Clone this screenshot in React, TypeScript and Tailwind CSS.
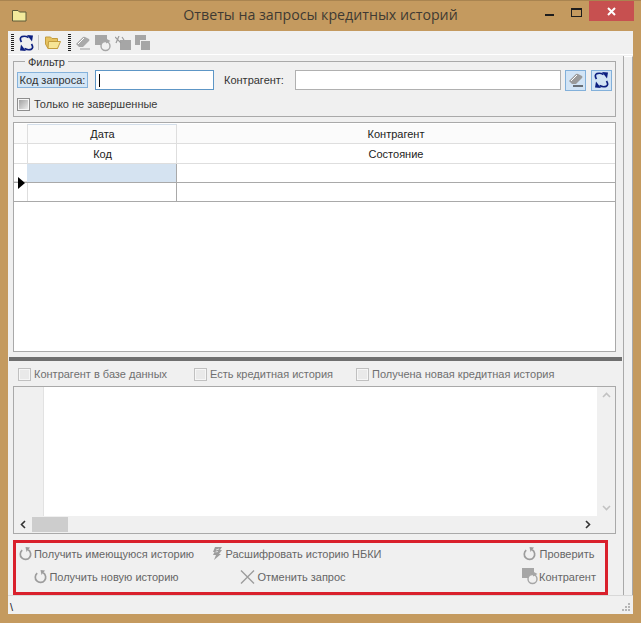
import type { ReactNode } from 'react'

const font = { fontFamily: '"Liberation Sans", Arial, sans-serif' }

function SyncIcon() {
  return (
    <svg width="15" height="16" viewBox="0 0 15 16" fill="none" stroke="#0c1f80" strokeWidth="1.7">
      <path d="M2.5 7 Q0 3 3 1.6 Q6 0.6 9.5 2.4" />
      <path d="M8 0 L14 0.5 L13 6.5 Z" fill="#0c1f80" stroke="none" />
      <path d="M12.5 9 Q15 13 12 14.4 Q9 15.4 5.5 13.6" />
      <path d="M7 16 L1 15.5 L2 9.5 Z" fill="#0c1f80" stroke="none" />
    </svg>
  )
}

function FolderIcon() {
  return (
    <svg width="16" height="14" viewBox="0 0 16 14">
      <path d="M0.5 1 H5.5 L7 2.5 H12.5 V12.5 H3 L0.5 8 Z" fill="#e6c25f" stroke="#c39c3e" />
      <path d="M3.5 5.5 H15.5 L12.5 12.5 H3 Z" fill="#f7e596" stroke="#c39c3e" />
    </svg>
  )
}

function EraserIcon({ color = '#a9a9a9', line = '#a9a9a9' }: { color?: string; line?: string }) {
  return (
    <svg width="16" height="14" viewBox="0 0 16 14">
      <path d="M1 8 L8 1 Q9 0.5 10 1 L14 3 Q15 4 14 5 L8 11 H4 Z" fill={color} />
      <path d="M3 8 L9 2" stroke="#fff" strokeWidth="1" />
      <path d="M5 13 H15" stroke={line} strokeWidth="1.2" />
    </svg>
  )
}

function SquareRefresh({ bg = '#f0f0f0' }: { bg?: string }) {
  return (
    <svg width="16" height="17" viewBox="0 0 16 17">
      <rect x="0" y="0" width="12" height="10" fill="#a6a6a6" />
      <circle cx="10.5" cy="11" r="4.5" fill={bg} stroke="#a6a6a6" strokeWidth="1.4" />
      <path d="M11 3.5 L15.5 6 L11 8.5 Z" fill="#a6a6a6" />
    </svg>
  )
}

function PercentSquare() {
  return (
    <svg width="16" height="14" viewBox="0 0 16 14">
      <rect x="5" y="4" width="11" height="10" fill="#a6a6a6" />
      <path d="M0 1 L6 7 M4 0 L1 7 M7 1 L9 4" stroke="#9c9c9c" strokeWidth="1.2" />
    </svg>
  )
}

function DoubleSquare() {
  return (
    <svg width="16" height="16" viewBox="0 0 16 16">
      <rect x="0" y="0" width="11" height="10" fill="#a6a6a6" />
      <rect x="5.5" y="5.5" width="10" height="10" fill="#a6a6a6" stroke="#f0f0f0" />
    </svg>
  )
}

function Reload() {
  return (
    <svg width="13" height="14" viewBox="0 0 13 14" fill="none">
      <path d="M3.2 3.2 A5.2 5.2 0 1 0 9.2 2.8" stroke="#9c9c9c" strokeWidth="1.7" />
      <path d="M6.5 0 L11 0.5 L7.5 5 Z" fill="#9c9c9c" />
    </svg>
  )
}

function Bolt() {
  return (
    <svg width="11" height="13" viewBox="0 0 11 13">
      <path d="M3 0 H10 L8 3 H10 L7 7 H9 L2 13 L4 8 H1 L2.5 5 H1 Z" fill="#9c9c9c" />
      <path d="M4 3 L7 2 M3.5 5 L6 4.5" stroke="#f0f0f0" strokeWidth="0.8" />
    </svg>
  )
}

function Cross() {
  return (
    <svg width="15" height="14" viewBox="0 0 15 14">
      <path d="M1 0.5 L14 13.5 M14 0.5 L1 13.5" stroke="#9c9c9c" strokeWidth="1.4" />
    </svg>
  )
}

function Check({ label, dim }: { label: string; dim?: boolean }) {
  return (
    <div className={`flex items-center ${dim ? 'gap-[3px]' : 'gap-[4px]'}`}>
      <span className={`block w-[13px] h-[13px] border ${dim ? 'border-[#c0c0c0] bg-[#e9e9e9]' : 'border-[#8e8e8e] bg-gradient-to-br from-[#9a9a9a] to-[#f4f4f4]'} shadow-[inset_0_0_0_1px_#f6f6f6]`} />
      <span className={`text-[11px] leading-[14px] whitespace-nowrap ${dim ? 'text-[#6f6f6f]' : 'text-[#3a3a3a]'}`}>{label}</span>
    </div>
  )
}

function ActionButton({ icon, label, gap = 'gap-[2px]' }: { icon: ReactNode; label: string; gap?: string }) {
  return (
    <div className={`flex items-center justify-center ${gap} text-[11px] leading-[14px] text-[#666] whitespace-nowrap`}>
      {icon}
      <span>{label}</span>
    </div>
  )
}

function GridRow({ left, right, cls = '', leftCls = '' }: { left: string; right: string; cls?: string; leftCls?: string }) {
  return (
    <div className={`flex h-[20px] border-b border-[#dedede] ${cls}`}>
      <div className="w-[13px] shrink-0" />
      <div className={`w-[150px] shrink-0 flex items-center justify-center pt-[1px] pl-[1px] border-x border-[#dedede] ${leftCls}`}>{left}</div>
      <div className="flex-1 flex items-center justify-center pt-[1px]">{right}</div>
    </div>
  )
}

export default function App() {
  return (
    <div className="w-[641px] h-[623px] bg-[#c49a5f] flex flex-col overflow-hidden" style={font}>
      <div className="h-[31px] shrink-0 relative flex items-center justify-center border-t border-[#a98450]">
        <svg className="absolute left-[12px] top-[8px]" width="15" height="13" viewBox="0 0 15 13">
          <path d="M0.5 1.5 H6 L7.5 3 H14 V12 H0.5 Z" fill="#f3ea9c" stroke="#5c5a38" />
        </svg>
        <span className="text-[14.2px] text-[#3f3a33] pb-[2px]" style={{ fontFamily: '"Open Sans", sans-serif' }}>
          Ответы на запросы кредитных историй
        </span>
        <div className="absolute left-[545px] top-[13px] w-[9px] h-[2px] bg-[#1d1d1d]" />
        <div className="absolute left-[571px] top-[7px] w-[11px] h-[9px] border border-[#1d1d1d] border-t-2" />
        <div className="absolute left-[589px] top-[0px] w-[45px] h-[20px] bg-[#c75050] flex items-center justify-center">
          <svg width="9" height="9" viewBox="0 0 9 9">
            <path d="M1 1 L8 8 M8 1 L1 8" stroke="#fff" strokeWidth="2" />
          </svg>
        </div>
      </div>

      <div className="flex-1 mx-[8px] mb-[9px] bg-[#f0f0f0] flex flex-col min-h-0 text-[#222]">
        {/* toolbar */}
        <div className="h-[24px] shrink-0 border-b border-white flex items-center pl-[3px]">
          <div className="w-[3px] h-[18px] mr-[5px] bg-[repeating-linear-gradient(to_bottom,#222_0_1px,transparent_1px_2px)]" />
          <div className="mt-[1px]"><SyncIcon /></div>
          <div className="w-px h-[15px] bg-[#c4c4c4] ml-[4px] mr-[6px]" />
          <FolderIcon />
          <div className="w-[3px] h-[18px] ml-[7px] mr-[3px] bg-[repeating-linear-gradient(to_bottom,#222_0_1px,transparent_1px_2px)]" />
          <div className="flex items-center gap-[3px] ml-[1px]">
            <EraserIcon />
            <div className="mt-[2px] ml-[1px]"><SquareRefresh /></div>
            <div className="ml-[1px]"><PercentSquare /></div>
            <div className="ml-[1px]"><DoubleSquare /></div>
          </div>
        </div>

        <div className="flex-1 flex min-h-0">
          <div className="w-[614px] shrink-0 flex flex-col min-h-0">
            {/* filter */}
            <div className="relative ml-[5px] mt-[6px] w-[603px] h-[56px] shrink-0 border border-[#a9a9a9] pt-[8px] pl-[3px]">
              <span className="absolute left-[11px] top-[-7px] bg-[#f0f0f0] px-[3px] text-[11px] leading-[14px] text-[#333]">Фильтр</span>
              <div className="flex items-center h-[20px]">
                <span className="block w-[71px] h-[16px] border border-[#85b2db] bg-[#d4e6f6] text-[11px] leading-[14px] text-center whitespace-nowrap text-[#333]">Код запроса:</span>
                <div className="ml-[7px] w-[119px] h-[20px] border border-[#5d96c6] bg-white flex items-center pl-[3px]">
                  <div className="w-px h-[13px] bg-black" />
                </div>
                <span className="ml-[10px] text-[11px] leading-[14px] w-[71px] whitespace-nowrap text-[#333]">Контрагент:</span>
                <div className="w-[266px] h-[20px] border border-[#b0b0b0] bg-white" />
                <div className="ml-[4px] w-[21px] h-[21px] border border-[#82b0da] bg-[#d2e4f5] flex items-center justify-center">
                  <EraserIcon color="#9a9a9a" line="#222" />
                </div>
                <div className="ml-[5px] w-[21px] h-[21px] border border-[#82b0da] bg-[#d2e4f5] flex items-center justify-center">
                  <SyncIcon />
                </div>
              </div>
              <div className="mt-[7px]">
                <Check label="Только не завершенные" />
              </div>
            </div>

            {/* grid */}
            <div className="ml-[5px] mt-[5px] w-[603px] h-[230px] shrink-0 border border-[#a9a9a9] bg-white text-[11px] text-[#222] pt-[1px]">
              <GridRow left="Дата" right="Контрагент" cls="bg-[#fbfbfb]" leftCls="border-t border-t-[#d3deea]" />
              <GridRow left="Код" right="Состояние" />
              <div className="flex h-[19px] border-b border-[#a9a9a9]">
                <div className="w-[13px] shrink-0 border-b border-[#dedede] relative">
                  <div className="absolute left-[4px] top-[13px] w-0 h-0 border-y-[6px] border-y-transparent border-l-[7px] border-l-black" />
                </div>
                <div className="w-[149px] shrink-0 bg-[#d5e3f1]" />
                <div className="flex-1 border-l border-[#a9a9a9]" />
              </div>
              <div className="flex h-[19px] border-b border-[#a9a9a9]">
                <div className="w-[13px] shrink-0" />
                <div className="w-[149px] shrink-0 border-l border-[#dedede]" />
                <div className="flex-1 border-l border-[#a9a9a9]" />
              </div>
            </div>

            {/* splitter */}
            <div className="ml-[1px] mt-[5px] h-[4px] shrink-0 bg-[#6f6f6f]" />

            <div className="ml-[10px] mt-[6px] h-[14px] shrink-0 flex items-center">
              <div className="w-[176px]"><Check label="Контрагент в базе данных" dim /></div>
              <div className="w-[162px]"><Check label="Есть кредитная история" dim /></div>
              <Check label="Получена новая кредитная история" dim />
            </div>

            {/* memo */}
            <div className="ml-[5px] mt-[5px] w-[603px] h-[148px] shrink-0 border border-[#a9a9a9] flex flex-col">
              <div className="flex-1 flex min-h-0">
                <div className="w-[30px] bg-[#f0f0f0] border-r border-[#e2e2e2]" />
                <div className="flex-1 bg-white" />
                <div className="w-[18px] bg-[#f0f0f0] flex flex-col items-center justify-between py-[5px]">
                  <svg width="9" height="6" viewBox="0 0 9 6" fill="none"><path d="M1 5 L4.5 1.5 L8 5" stroke="#c2c2c2" strokeWidth="1.6" /></svg>
                  <svg width="9" height="6" viewBox="0 0 9 6" fill="none"><path d="M1 1 L4.5 4.5 L8 1" stroke="#c2c2c2" strokeWidth="1.6" /></svg>
                </div>
              </div>
              <div className="h-[17px] shrink-0 bg-[#f0f0f0] flex items-center">
                <svg className="ml-[6px]" width="6" height="9" viewBox="0 0 6 9" fill="none"><path d="M5 1 L1.5 4.5 L5 8" stroke="#333" strokeWidth="1.6" /></svg>
                <div className="ml-[6px] w-[36px] h-[15px] bg-[#cdcdcd]" />
                <svg className="ml-auto mr-[24px]" width="6" height="9" viewBox="0 0 6 9" fill="none"><path d="M1 1 L4.5 4.5 L1 8" stroke="#333" strokeWidth="1.6" /></svg>
              </div>
            </div>

            {/* actions */}
            <div className="ml-[5px] mt-[6px] w-[595px] h-[55px] shrink-0 border-[3px] border-[#d9202c] grid grid-cols-[181px_199px_1fr] grid-rows-[21px_25px] content-start items-center">
              <ActionButton icon={<Reload />} label="Получить имеющуюся историю" />
              <ActionButton icon={<Bolt />} label="Расшифровать историю НБКИ" gap="gap-[3px]" />
              <div className="justify-self-end w-[92px]"><ActionButton icon={<Reload />} label="Проверить" gap="gap-[3px]" /></div>
              <ActionButton icon={<Reload />} label="Получить новую историю" />
              <div className="pr-[7px]"><ActionButton icon={<Cross />} label="Отменить запрос" /></div>
              <div className="justify-self-end w-[92px]"><ActionButton icon={<SquareRefresh />} label="Контрагент" gap="gap-[1px]" /></div>
            </div>
          </div>

          {/* right strip */}
          <div className="flex-1 mt-[1px] ml-[1px] border-l border-[#a9a9a9] flex">
            <div className="w-[9px] border-r border-[#a9a9a9] border-t border-t-white" />
          </div>
        </div>

        {/* status bar */}
        <div className="h-[19px] shrink-0 border-t border-[#d8d8d8] relative text-[11px] leading-[14px] pl-[2px] pt-[4px] text-[#222]">
          \
          <svg className="absolute right-[2px] bottom-[2px]" width="9" height="9" viewBox="0 0 9 9" fill="#b5b5b5">
            <rect x="6" y="0" width="2" height="2" /><rect x="3" y="3" width="2" height="2" /><rect x="6" y="3" width="2" height="2" />
            <rect x="0" y="6" width="2" height="2" /><rect x="3" y="6" width="2" height="2" /><rect x="6" y="6" width="2" height="2" />
          </svg>
        </div>
      </div>
    </div>
  )
}
